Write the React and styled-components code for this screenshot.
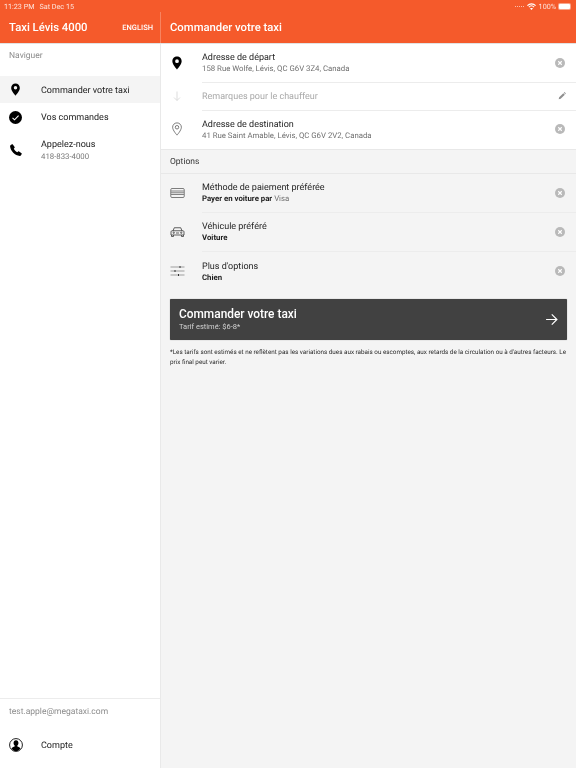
import React from 'react';
import styled, { createGlobalStyle } from 'styled-components';

const GlobalStyle = createGlobalStyle`
  html, body {
    margin: 0;
    padding: 0;
    height: 100%;
    background: #f4f4f4;
    font-family: Roboto, "Liberation Sans", sans-serif;
    text-rendering: geometricPrecision;
  }
  #root {
    height: 100%;
  }
`;

// own layer keeps the text greyscale like the screenshot
const Page = styled.div`
  position: relative;
  display: grid;
  grid-template-columns: 161px 1fr;
  width: 576px;
  height: 768px;
  overflow: hidden;
  will-change: transform;
`;

const StatusBar = styled.div`
  position: absolute;
  top: 0;
  left: 0;
  right: 0;
  height: 12px;
  padding: 0 4px;
  box-sizing: border-box;
  display: flex;
  justify-content: space-between;
  align-items: center;
  font-size: 7.2px;
  color: rgba(255, 255, 255, 0.85);
`;

const StatusGroup = styled.div`
  display: flex;
  align-items: center;
  gap: ${(p) => p.$gap}px;
`;

const Signal = styled.span`
  width: 9px;
  height: 1px;
  margin-top: 2px;
  border-top: 1px dotted rgba(255, 255, 255, 0.6);
`;

const Battery = styled.span`
  width: 11px;
  height: 5px;
  background: #fff;
  border-radius: 1px;
  box-shadow: 0 0 0 1px rgba(255, 255, 255, 0.45);
  margin-right: 2px;
`;

const Sidebar = styled.aside`
  display: flex;
  flex-direction: column;
  background: #fff;
  border-right: 1px solid #e9e9e9;
`;

const SideHeader = styled.header`
  position: relative;
  height: 44px;
  box-sizing: border-box;
  margin-right: -1px;
  padding: 12px 8px 0 9px;
  display: flex;
  align-items: center;
  justify-content: space-between;
  background: #f55a2b;
  border-bottom: 1px solid #e2e2e2;
  color: #fff;

  &::after {
    content: '';
    position: absolute;
    top: 12px;
    bottom: 0;
    right: 0;
    width: 1px;
    background: rgba(255, 255, 255, 0.25);
  }
`;

const Brand = styled.div`
  font-size: 11.3px;
  font-weight: 500;
`;

const Lang = styled.div`
  font-size: 7.5px;
  font-weight: 500;
`;

const NavLabel = styled.div`
  padding: ${(p) => p.$padding};
  font-size: 8.5px;
  line-height: 10px;
  color: #8c8c8c;
`;

const NavItem = styled.div`
  display: flex;
  align-items: center;
  min-height: ${(p) => p.$height}px;
  padding-left: 9px;
  background: ${(p) => (p.$active ? '#f4f4f4' : 'transparent')};
`;

const NavIcon = styled.div`
  width: 32px;
  flex: none;
  display: flex;
  align-items: center;
`;

const NavCopy = styled.div`
  padding-top: 2px;
`;

const NavText = styled.div`
  font-size: 9px;
  line-height: 12px;
  color: #222;
`;

const NavSub = styled.div`
  font-size: 7.8px;
  line-height: 11px;
  color: #777;
`;

const SideFooter = styled.div`
  margin-top: auto;
  padding-bottom: 3px;
  border-top: 1px solid #ececec;
`;

const Main = styled.main`
  display: flex;
  flex-direction: column;
  background: #f4f4f4;
`;

const MainHeader = styled.header`
  height: 44px;
  box-sizing: border-box;
  padding: 12px 0 0 9px;
  display: flex;
  align-items: center;
  background: #f55a2b;
  border-bottom: 1px solid #e2e2e2;
  color: #fff;
  font-size: 11.3px;
  font-weight: 500;
`;

const Group = styled.section`
  background: ${(p) => (p.$plain ? 'transparent' : '#fff')};
  border-bottom: ${(p) => (p.$plain ? 'none' : '1px solid #e8e8e8')};
`;

const Row = styled.div`
  display: grid;
  grid-template-columns: 32px 1fr 24px;
  align-items: center;
  height: ${(p) => p.$height}px;
  box-sizing: border-box;
  padding-left: 9px;
`;

const RowBody = styled.div`
  align-self: stretch;
  display: flex;
  flex-direction: column;
  justify-content: center;
  border-bottom: ${(p) => (p.$last ? 'none' : '1px solid #ececec')};
  margin-right: -24px;
`;

const RowTitle = styled.div`
  font-size: 9px;
  line-height: 12px;
  color: ${(p) => (p.$muted ? '#a9a9a9' : '#262626')};
`;

const RowSub = styled.div`
  font-size: 7.8px;
  line-height: 10px;
  color: #6f6f6f;

  strong {
    font-weight: 700;
    color: #1c1c1c;
  }
`;

const RowIcon = styled.div`
  display: flex;
  align-items: center;
  margin-bottom: 2px;
`;

const RowAction = styled.div`
  display: flex;
  align-items: center;
  justify-content: center;
  padding-right: ${(p) => p.$inset}px;
  margin-bottom: 2px;
  position: relative;
`;

const SectionLabel = styled.div`
  height: 24px;
  box-sizing: border-box;
  padding-left: 9px;
  display: flex;
  align-items: center;
  font-size: 8.5px;
  color: #333;
  border-bottom: 1px solid #e8e8e8;
`;

const OrderButton = styled.button`
  display: flex;
  align-items: center;
  justify-content: space-between;
  width: 397px;
  height: 41px;
  margin: 8px 0 0 9px;
  padding: 0 9px;
  border: 0;
  border-radius: 1px;
  background: #414141;
  color: #fff;
  font-family: inherit;
  text-align: left;
  box-shadow: 0 0 1px rgba(0, 0, 0, 0.5);
`;

const OrderTitle = styled.div`
  font-size: 11.9px;
  line-height: 15px;
  font-weight: 500;
`;

const OrderSub = styled.div`
  font-size: 7.5px;
  line-height: 10px;
  color: #d2d2d2;
`;

const Note = styled.p`
  width: 398px;
  margin: 7px 0 0 9px;
  font-size: 6.3px;
  line-height: 10px;
  color: #2b2b2b;
`;

const PinFilled = ({ size = 13 }) => (
  <svg width={size} height={size} viewBox="0 0 24 24">
    <path fill="#000" fillRule="evenodd" d="M12 1C7.400 1 4 4.600 4 9c0 5.600 8 14 8 14s8-8.400 8-14c0-4.400-3.400-8-8-8zm0 11a3.200 3.200 0 1 1 0-6.400 3.200 3.200 0 0 1 0 6.400z" />
  </svg>
);

const PinOutline = () => (
  <svg width="14" height="14" viewBox="0 0 24 24" fill="none" stroke="#555" strokeWidth="1.300">
    <path d="M12 1.500C7.600 1.500 4.500 5 4.500 9c0 5.200 7.500 13.500 7.500 13.500S19.500 14.200 19.500 9c0-4-3.100-7.500-7.500-7.500z" />
    <circle cx="12" cy="9" r="3" />
  </svg>
);

const CheckCircle = () => (
  <svg width="13" height="13" viewBox="0 0 24 24">
    <circle cx="12" cy="12" r="12" fill="#000" />
    <path d="M6.500 12.500l3.700 3.700 7.500-7.700" fill="none" stroke="#fff" strokeWidth="2" />
  </svg>
);

const Phone = () => (
  <svg width="14" height="14" viewBox="0 0 24 24">
    <path fill="#000" d="M6.600 2.500l3 4.200c.3.500.3 1 0 1.500L8.200 10c1.300 2.600 3.300 4.600 5.800 5.900l1.800-1.400c.5-.3 1-.3 1.500 0l4.200 3c.5.400.6 1 .3 1.500l-1.500 2.400c-.4.600-1 .9-1.700.8C10 21.500 2.600 14 1.800 5.600c-.1-.7.200-1.300.8-1.700L5 2.300c.5-.4 1.200-.3 1.600.2z" />
  </svg>
);

const Account = () => (
  <svg width="14" height="14" viewBox="0 0 24 24">
    <circle cx="12" cy="12" r="11" fill="#fff" stroke="#000" strokeWidth="1.500" />
    <path fill="#000" d="M12 4c-2.600 0-4.200 2-4.200 4.700 0 1.800.8 3.400 1.900 4.300v1.400c-2 .8-4.300 1.600-5.400 3.400C6.300 20.600 9 22.200 12 22.200s5.700-1.600 7.700-4.400c-1.100-1.800-3.400-2.600-5.400-3.400V13c1.100-.9 1.900-2.500 1.900-4.300C16.200 6 14.600 4 12 4z" />
  </svg>
);

const ArrowDown = () => (
  <svg width="12" height="12" viewBox="0 0 24 24" fill="none" stroke="#d4d4d4" strokeWidth="1.600" style={{ marginLeft: 1 }}>
    <path d="M12 3v18M6 15l6 6 6-6" />
  </svg>
);

const Card = () => (
  <svg width="15" height="12" viewBox="0 0 30 24" fill="none" stroke="#555" strokeWidth="1.500">
    <rect x="1.500" y="3" width="27" height="18" rx="2.500" />
    <path d="M2 8h26M2 11.500h26M2 15h26" stroke="#777" strokeWidth="1.800" />
  </svg>
);

const Car = () => (
  <svg width="15" height="12" viewBox="0 0 30 24" fill="none" stroke="#444" strokeWidth="1.700">
    <path d="M6 10l2.500-6.500h13L24 10" />
    <path d="M2 11.500c0-1 1-2 2-2h22c1 0 2 1 2 2V18H2z" />
    <path d="M3 18v3h4v-3M23 18v3h4v-3" />
    <circle cx="7.500" cy="13.500" r="1.300" />
    <circle cx="22.500" cy="13.500" r="1.300" />
    <path d="M12 14h6" />
  </svg>
);

const Sliders = () => (
  <svg width="15" height="12" viewBox="0 0 30 24" fill="none" stroke="#666" strokeWidth="1.200">
    <path d="M1 4h28M1 12h28M1 20h28" />
    <path d="M20 2v4M10 10v4M17 18v4" stroke="#333" strokeWidth="2" />
  </svg>
);

const Clear = () => (
  <svg width="10" height="10" viewBox="0 0 20 20">
    <circle cx="10" cy="10" r="10" fill="#b9b9b9" />
    <path d="M6.500 6.500l7 7M13.500 6.500l-7 7" stroke="#fff" strokeWidth="2.200" />
  </svg>
);

const Pencil = () => (
  <svg width="8" height="8" viewBox="0 0 24 24">
    <path fill="#8f8f8f" d="M2 22l1.500-6L16 3.500l4.500 4.500L8 20.500zM17.500 2l1-1c.6-.5 1.400-.5 2 0l2.500 2.500c.5.600.5 1.400 0 2l-1 1z" />
  </svg>
);

const Arrow = () => (
  <svg width="13" height="13" viewBox="0 0 24 24" fill="none" stroke="#fff" strokeWidth="2.200">
    <path d="M2 12h20M12.500 2.500L22 12l-9.500 9.500" />
  </svg>
);

const Wifi = () => (
  <svg width="9" height="7" viewBox="0 0 24 18" fill="none" stroke="#fff" strokeWidth="3">
    <path d="M1 6.500c6-6 16-6 22 0M5 10.500c4-4 10-4 14 0" />
    <path d="M12 18l-3.800-3.800c2.200-1.700 5.400-1.700 7.600 0z" fill="#fff" stroke="none" />
  </svg>
);

const navItems = [
  { icon: <PinFilled />, label: 'Commander votre taxi', height: 27, active: true },
  { icon: <CheckCircle />, label: 'Vos commandes', height: 28 },
  { icon: <Phone />, label: 'Appelez-nous', sub: '418-833-4000', height: 37 },
];

const addressRows = [
  { icon: <PinFilled size={14} />, title: 'Adresse de départ', sub: '158 Rue Wolfe, Lévis, QC G6V 3Z4, Canada', height: 39 },
  { icon: <ArrowDown />, title: 'Remarques pour le chauffeur', muted: true, height: 28, action: <Pencil />, inset: 4 },
  { icon: <PinOutline />, title: 'Adresse de destination', sub: '41 Rue Saint Amable, Lévis, QC G6V 2V2, Canada', height: 38, last: true },
];

const optionRows = [
  { icon: <Card />, title: 'Méthode de paiement préférée', sub: <><strong>Payer en voiture par</strong> Visa</> },
  { icon: <Car />, title: 'Véhicule préféré', sub: <strong>Voiture</strong> },
  { icon: <Sliders />, title: "Plus d'options", sub: <strong>Chien</strong>, last: true },
];

const ListRow = ({ icon, title, sub, muted, height = 39, action = <Clear />, inset = 8, last }) => (
  <Row $height={height}>
    <RowIcon>{icon}</RowIcon>
    <RowBody $last={last}>
      <RowTitle $muted={muted}>{title}</RowTitle>
      {sub && <RowSub>{sub}</RowSub>}
    </RowBody>
    <RowAction $inset={inset}>{action}</RowAction>
  </Row>
);

const App = () => (
  <>
    <GlobalStyle />
    <Page>
      <Sidebar>
        <SideHeader>
          <Brand>Taxi Lévis 4000</Brand>
          <Lang>ENGLISH</Lang>
        </SideHeader>
        <NavLabel $padding="7px 9px 15px">Naviguer</NavLabel>
        {navItems.map((item) => (
          <NavItem key={item.label} $height={item.height} $active={item.active}>
            <NavIcon>{item.icon}</NavIcon>
            <NavCopy>
              <NavText>{item.label}</NavText>
              {item.sub && <NavSub>{item.sub}</NavSub>}
            </NavCopy>
          </NavItem>
        ))}
        <SideFooter>
          <NavLabel $padding="8px 9px 7px">test.apple@megataxi.com</NavLabel>
          <NavItem $height={41}>
            <NavIcon><Account /></NavIcon>
            <NavCopy>
              <NavText>Compte</NavText>
            </NavCopy>
          </NavItem>
        </SideFooter>
      </Sidebar>

      <Main>
        <MainHeader>Commander votre taxi</MainHeader>
        <Group>
          {addressRows.map((row) => <ListRow key={row.title} {...row} />)}
        </Group>
        <SectionLabel>Options</SectionLabel>
        <Group $plain>
          {optionRows.map((row) => <ListRow key={row.title} {...row} />)}
        </Group>
        <OrderButton>
          <div>
            <OrderTitle>Commander votre taxi</OrderTitle>
            <OrderSub>Tarif estimé: $6-8*</OrderSub>
          </div>
          <Arrow />
        </OrderButton>
        <Note>
          *Les tarifs sont estimés et ne reflètent pas les variations dues aux rabais ou escomptes, aux retards de la circulation ou à d'autres facteurs. Le prix final peut varier.
        </Note>
      </Main>

      <StatusBar>
        <StatusGroup $gap={5}>
          <span>11:23 PM</span>
          <span>Sat Dec 15</span>
        </StatusGroup>
        <StatusGroup $gap={3}>
          <Signal />
          <Wifi />
          <span>100%</span>
          <Battery />
        </StatusGroup>
      </StatusBar>
    </Page>
  </>
);

export default App;
